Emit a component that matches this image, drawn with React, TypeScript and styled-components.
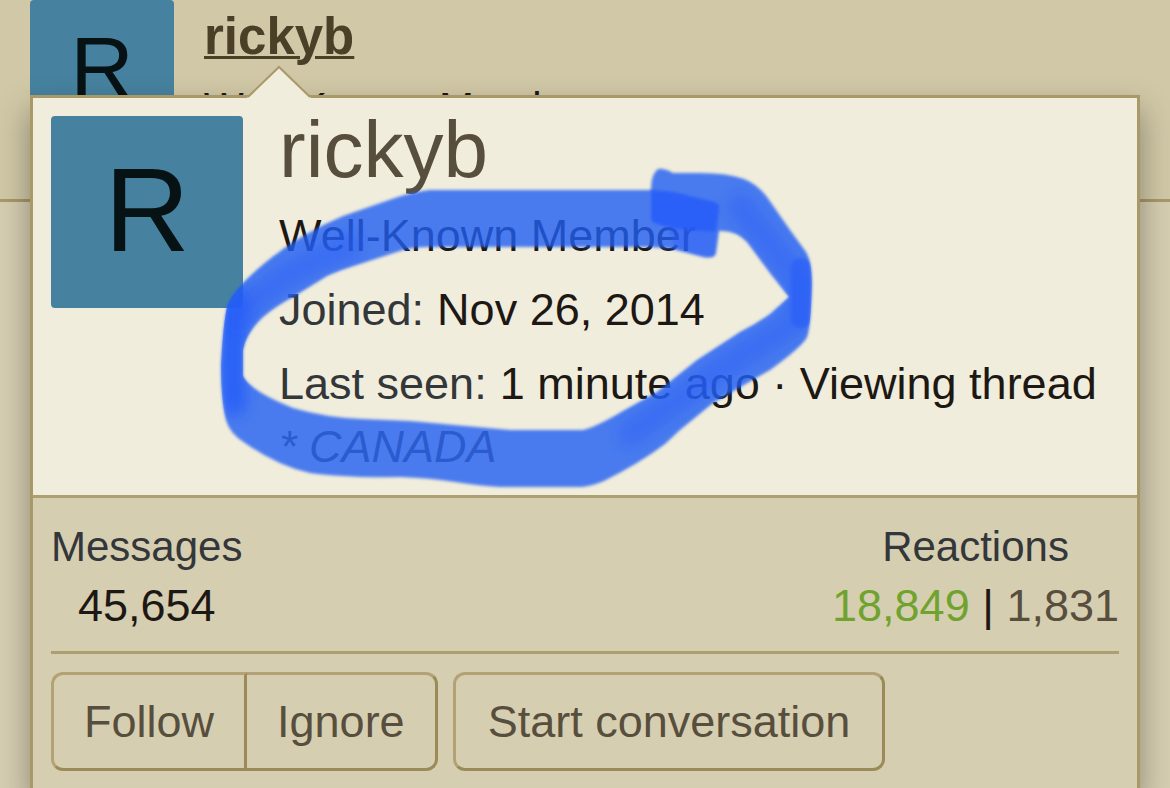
import React from "react";
import styled, { createGlobalStyle } from "styled-components";

const GlobalStyle = createGlobalStyle`
  *, *::before, *::after { box-sizing: border-box; }
  body {
    margin: 0;
    background: #d6ceb1;
    font-family: "Liberation Sans", Arial, sans-serif;
    font-size: 45px;
    line-height: 63px;
    color: #1d1814;
  }
  a { color: #584e3d; text-decoration: none; }
  h3, p, dl, dt, dd { margin: 0; font-weight: 400; }
`;

const Page = styled.main`
  position: relative;
  height: 100vh;
  overflow: hidden;
`;

const PostUser = styled.section`
  display: flex;
  gap: 30px;
  height: 202px;
  padding: 0 30px;
  background: #d1c8a7;
  border-bottom: 3px solid #a99868;
`;

const Avatar = styled.a<{ $size: number; $font: number; $lift: number }>`
  flex: none;
  display: flex;
  align-items: center;
  justify-content: center;
  width: ${(p) => p.$size}px;
  height: ${(p) => p.$size}px;
  padding-bottom: ${(p) => p.$lift}px;
  border-radius: 4px;
  background: #46829f;
  color: #071214;
  font-size: ${(p) => p.$font}px;
  line-height: ${(p) => p.$font}px;
`;

const PostUserText = styled.div`
  padding-top: 4px;
`;

const PostUserName = styled.a`
  display: block;
  font-size: 51px;
  line-height: 66px;
  font-weight: 700;
  color: #4a3f27;
  text-decoration: underline;
  text-decoration-thickness: 3px;
`;

const PostUserTitle = styled.p`
  padding-top: 8px;
  font-size: 42px;
  line-height: 60px;
`;

const Tooltip = styled.aside`
  position: absolute;
  top: 95px;
  left: 30px;
  right: 30px;
  border: 3px solid #a99868;
  background: #d6ceb1;
  box-shadow: 0 15px 30px rgba(0, 0, 0, 0.35);
`;

const Arrow = styled.svg`
  position: absolute;
  top: -33px;
  left: 213px;
`;

const CardHeader = styled.header`
  display: flex;
  gap: 36px;
  padding: 18px 18px 17px;
  background: #f1eddc;
  border-bottom: 3px solid #ae9f70;
`;

const CardInfo = styled.div`
  flex: 1;
  min-width: 0;
`;

const CardName = styled.h3`
  margin-bottom: 20px;
  font-size: 80px;
  line-height: 68px;
`;

const Blurb = styled.p`
  white-space: nowrap;
  & + dl { margin-top: 11px; }
`;

const Pair = styled.dl`
  display: flex;
  gap: 13px;
  white-space: nowrap;
  & + & { margin-top: 11px; }
  dt { color: #333739; }
`;

const Banner = styled.p`
  font-style: italic;
  color: #584e3d;
`;

const CardFooter = styled.footer`
  padding: 18px;
`;

const Stats = styled.dl`
  display: flex;
  justify-content: space-between;
  padding-bottom: 17px;
  border-bottom: 3px solid #ae9f70;
  text-align: center;
  dt { font-size: 42px; line-height: 62px; color: #333739; }
  dd { line-height: 56px; }
`;

const Positive = styled.span`
  color: #6fa32d;
`;

const Negative = styled.span`
  color: #584e3d;
`;

const Actions = styled.div`
  display: flex;
  gap: 15px;
  padding-top: 18px;
`;

const ButtonGroup = styled.div`
  display: flex;
`;

const Button = styled.button<{ $join?: "left" | "right" }>`
  height: 99px;
  padding: 0 ${(p) => (p.$join ? 30 : 32)}px;
  border: 3px solid;
  border-color: #b3a275 #9b8b58 #9b8b58 #b3a275;
  border-radius: ${(p) =>
    p.$join === "left" ? "12px 0 0 12px" : p.$join === "right" ? "0 12px 12px 0" : "12px"};
  ${(p) => p.$join === "right" && "border-left: 0;"}
  background: transparent;
  font: inherit;
  color: #584e3d;
  white-space: nowrap;
`;

const Marker = styled.svg`
  position: absolute;
  top: 0;
  left: 0;
  pointer-events: none;
`;

const ring =
  "M430 190Q412 192 395 198L343 216Q300 234 266 262Q232 290 227 307Q223 325 221 365" +
  "Q221 400 226 420Q230 434 245 443Q278 466 310 473Q345 478 400 477Q430 478 455 482" +
  "Q480 486 500 487H582Q592 486 604 481Q640 463 665 444L680 430L713 403L770 370" +
  "Q802 347 807 337Q811 325 812 283Q812 262 806 252L790 230L767 197Q757 184 744 179" +
  "Q728 173 700 173H673Q664 168 658 169Q651 174 651 190Z" +
  "M430 247H650L673 249L703 257Q715 259 716 253L719 231Q736 230 747 242L770 273L789 297" +
  "L770 314Q756 324 740 332L697 360L657 392L623 411Q596 427 583 430H510L477 427L410 421" +
  "L363 419Q327 418 293 408Q250 391 243 376V350Q246 333 263 317Q276 306 293 297L327 276" +
  "Q340 270 363 263L403 250Q415 247 430 247Z";

function MarkerRing() {
  return (
    <Marker width="860" height="520" viewBox="0 0 860 520" aria-hidden="true">
      <defs>
        <filter id="edge" filterUnits="userSpaceOnUse" x="0" y="0" width="860" height="520">
          <feGaussianBlur stdDeviation="1.5" />
        </filter>
        <filter id="soft" filterUnits="userSpaceOnUse" x="0" y="0" width="860" height="520">
          <feGaussianBlur stdDeviation="8" />
        </filter>
        <clipPath id="ring">
          <path clipRule="evenodd" d={ring} />
        </clipPath>
      </defs>
      <path d={ring} fillRule="evenodd" fill="#225ff3" fillOpacity="0.8" filter="url(#edge)" />
      <g clipPath="url(#ring)" fill="none" stroke="#245cf8" strokeLinecap="round" strokeLinejoin="round">
        <path d="M236 300Q231 340 234 404" strokeWidth="24" strokeOpacity="0.9" filter="url(#soft)" />
        <path d="M350 246Q270 276 238 318" strokeWidth="26" strokeOpacity="0.45" filter="url(#soft)" />
        <path d="M740 206L798 280V320L720 370L630 434" strokeWidth="26" strokeOpacity="0.45" filter="url(#soft)" />
        <path d="M801 268V318" strokeWidth="20" strokeOpacity="0.6" filter="url(#edge)" />
      </g>
      <path
        d="M651 190Q676 191 690 196L715 202Q720 204 719 210L716 232L694 231Q662 228 651 221Z"
        fill="#245cf8"
        fillOpacity="0.85"
        filter="url(#edge)"
      />
      <path
        d="M668 229L717 232L714 255Q711 257 705 256L675 249Z"
        fill="#245cf8"
        fillOpacity="0.35"
        filter="url(#edge)"
      />
    </Marker>
  );
}

export default function App() {
  return (
    <>
      <GlobalStyle />
      <Page>
        <PostUser>
          <Avatar href="#rickyb" $size={144} $font={88} $lift={8}>R</Avatar>
          <PostUserText>
            <PostUserName href="#rickyb">rickyb</PostUserName>
            <PostUserTitle>Well-Known Member</PostUserTitle>
          </PostUserText>
        </PostUser>

        <Tooltip>
          <Arrow width="66" height="33" viewBox="0 0 66 33" aria-hidden="true">
            <path d="M1 33L33 2L65 33Z" fill="#f1eddc" />
            <path d="M2 32L33 2L64 32" fill="none" stroke="#a99868" strokeWidth="2" />
          </Arrow>
          <CardHeader>
            <Avatar href="#rickyb" $size={192} $font={118} $lift={4}>R</Avatar>
            <CardInfo>
              <CardName>
                <a href="#rickyb">rickyb</a>
              </CardName>
              <Blurb>Well-Known Member</Blurb>
              <Pair>
                <dt>Joined:</dt>
                <dd>Nov 26, 2014</dd>
              </Pair>
              <Pair>
                <dt>Last seen:</dt>
                <dd>1 minute ago · Viewing thread</dd>
              </Pair>
              <Banner>* CANADA</Banner>
            </CardInfo>
          </CardHeader>
          <CardFooter>
            <Stats>
              <div>
                <dt>Messages</dt>
                <dd>45,654</dd>
              </div>
              <div>
                <dt>Reactions</dt>
                <dd>
                  <Positive>18,849</Positive> | <Negative>1,831</Negative>
                </dd>
              </div>
            </Stats>
            <Actions>
              <ButtonGroup>
                <Button type="button" $join="left">Follow</Button>
                <Button type="button" $join="right">Ignore</Button>
              </ButtonGroup>
              <Button type="button">Start conversation</Button>
            </Actions>
          </CardFooter>
        </Tooltip>
        <MarkerRing />
      </Page>
    </>
  );
}
